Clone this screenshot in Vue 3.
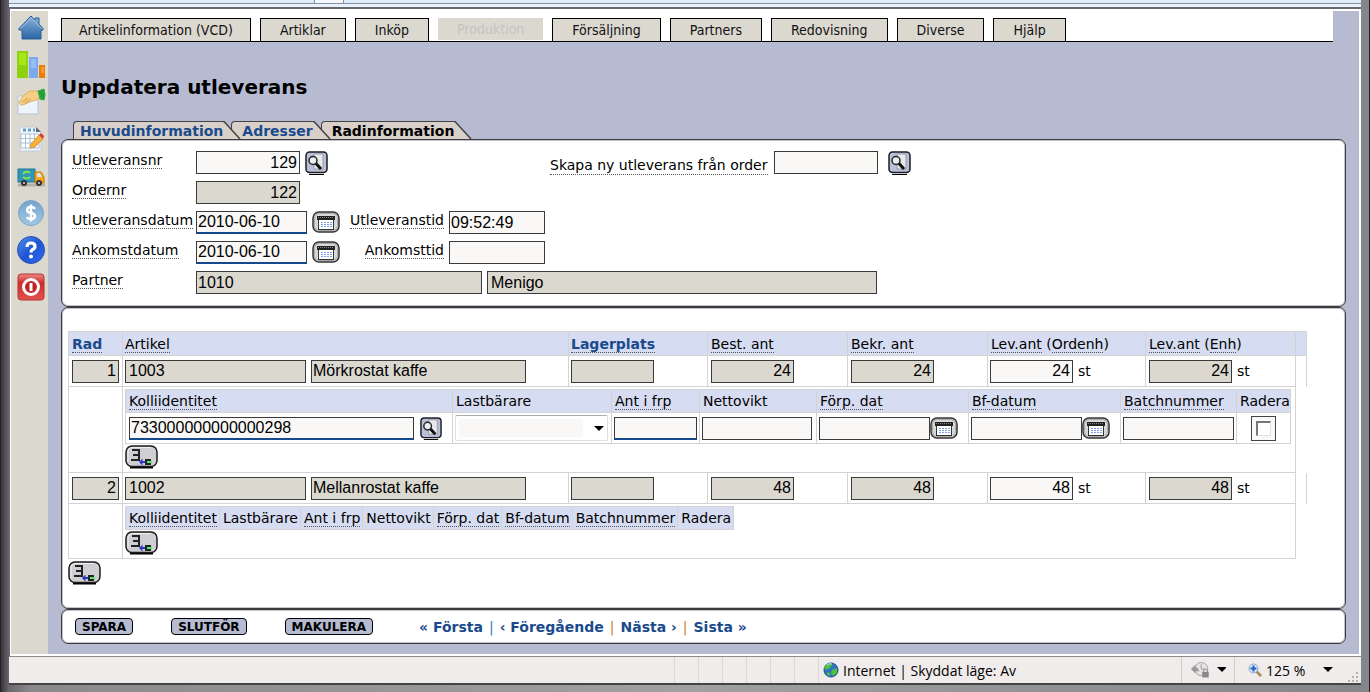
<script setup>
import { ref } from 'vue'

const menu = [
  { text: 'Artikelinformation (VCD)' },
  { text: 'Artiklar' },
  { text: 'Inköp' },
  { text: 'Produktion', off: true },
  { text: 'Försäljning' },
  { text: 'Partners' },
  { text: 'Redovisning' },
  { text: 'Diverse' },
  { text: 'Hjälp' },
]

const tabs = ['Huvudinformation', 'Adresser', 'Radinformation']

const form = ref({
  nr: '129',
  order: '122',
  fromOrder: '',
  shipDate: '2010-06-10',
  shipTime: '09:52:49',
  arriveDate: '2010-06-10',
  arriveTime: '',
  partnerNo: '1010',
  partnerName: 'Menigo',
})

const rows = ref([
  { no: '1', article: '1003', name: 'Mörkrostat kaffe', place: '', ordered: '24', confirmed: '24', qty: '24', qtyUnit: '24', packages: [{ id: '733000000000000298' }] },
  { no: '2', article: '1002', name: 'Mellanrostat kaffe', place: '', ordered: '48', confirmed: '48', qty: '48', qtyUnit: '48', packages: [] },
])

const packHead = [
  { text: 'Kolliidentitet', term: true, cls: 'p-id' },
  { text: 'Lastbärare', cls: 'p-carrier' },
  { text: 'Ant i frp', term: true, cls: 'p-count' },
  { text: 'Nettovikt', cls: 'p-weight' },
  { text: 'Förp. dat', term: true, cls: 'p-date' },
  { text: 'Bf-datum', term: true, cls: 'p-date' },
  { text: 'Batchnummer', term: true, cls: 'p-batch' },
  { text: 'Radera', cls: 'p-del' },
]
</script>

<template>
  <div class="window">
    <div class="chrome-top"><span class="chrome-tab"></span></div>
    <div class="viewport">
      <nav class="side" aria-label="Genvägar">
        <a href="#" aria-label="Hem">
          <svg width="30" height="30" viewBox="0 0 30 30">
            <defs><linearGradient id="gh" x1="0" y1="0" x2="0" y2="1"><stop offset="0" stop-color="#8db4dc" /><stop offset="1" stop-color="#2a63a4" /></linearGradient></defs>
            <path d="M15 3 L19 7 V5 H23 V11 L27 15.500 V17 H25 V26 H6 V17 H3 V15.500 Z" fill="url(#gh)" stroke="#2c5f9a" />
            <path d="M4 16 L15 5 L26 16" fill="none" stroke="#9fc0e2" />
          </svg>
        </a>
        <a href="#" aria-label="Statistik">
          <svg width="30" height="30" viewBox="0 0 30 30">
            <rect x="1" y="1" width="11" height="27" fill="#8fd010" /><rect x="3" y="3" width="7" height="12" fill="#a8e61c" />
            <rect x="13" y="7" width="9" height="21" fill="#7ba9ee" /><rect x="15" y="9" width="5" height="9" fill="#95bcf4" />
            <rect x="23" y="15" width="6" height="13" fill="#ec7c08" /><rect x="25" y="17" width="3" height="6" fill="#f79a2e" />
          </svg>
        </a>
        <a href="#" aria-label="Överlämna">
          <svg width="30" height="30" viewBox="0 0 30 30">
            <path d="M2 9 H22 V27 H2 Z" fill="#eef4fb" stroke="#b9c4d0" />
            <path d="M3 15 C6 10 9 6 14 4 L24 4 L25 11 C21 12 20 14 16 14 L9 17 C6 19 3 18 3 15 Z" fill="#f3cf86" stroke="#dcb064" />
            <path d="M6 15 L12 11 M9 16 L15 12" stroke="#cf9d4c" fill="none" />
            <path d="M22 4 L28 2 Q30 8 28 13 L24 12 Z" fill="#22a33a" stroke="#3aa34c" />
          </svg>
        </a>
        <a href="#" aria-label="Schema">
          <svg width="30" height="30" viewBox="0 0 30 30">
            <path d="M4 3 H20 L25 8 V27 H4 Z" fill="#f1f5fa" stroke="#c3ccd8" />
            <path d="M7 6 H19" stroke="#5a9bd0" stroke-width="3" stroke-dasharray="3 2" />
            <path d="M5 10 H23 V24 H5 Z M5 14.500 H23 M5 19 H23 M9.500 10 V24 M14 10 V24 M18.500 10 V24" fill="#fff" stroke="#a9bfd8" />
            <path d="M20 3 L25 8 H20 Z" fill="#5e6670" />
            <path d="M15 20 L23 11 L27 15 L19 23 L14 24 Z" fill="#f5b13a" stroke="#d99a42" />
            <path d="M23 11 L25 9 L28 12 L27 15 Z" fill="#d83a3a" />
          </svg>
        </a>
        <a href="#" aria-label="Transport">
          <svg width="30" height="30" viewBox="0 0 30 30">
            <path d="M2 24 H29" stroke="#b3b0a9" stroke-width="3" />
            <rect x="2" y="8" width="17" height="13" fill="#2f97ba" stroke="#1f7796" />
            <path d="M7 13 Q10 9 14 12 M14 16 Q11 19 7 16" fill="none" stroke="#8be04c" stroke-width="2" />
            <path d="M19 11 H25 L28 16 V22 H19 Z" fill="#f7a81b" stroke="#c97c0c" />
            <path d="M21 12 H24 L26 16 H21 Z" fill="#cfe6f5" />
            <circle cx="8" cy="22" r="3" fill="#333" /><circle cx="8" cy="22" r="1" fill="#ddd" />
            <circle cx="23" cy="22" r="3" fill="#333" /><circle cx="23" cy="22" r="1" fill="#ddd" />
          </svg>
        </a>
        <a href="#" aria-label="Ekonomi">
          <svg width="30" height="30" viewBox="0 0 30 30">
            <defs><linearGradient id="gd" x1="0" y1="0" x2="0" y2="1"><stop offset="0" stop-color="#74a3c9" /><stop offset="1" stop-color="#a0c9e6" /></linearGradient></defs>
            <circle cx="15" cy="15" r="12.500" fill="url(#gd)" stroke="#7ba6c8" />
            <path d="M19 11 Q18 9 15 9 Q11 9 11 12 Q11 14.500 15 15 Q19 15.500 19 18 Q19 21 15 21 Q12 21 11 19 M15 6.500 V23.500" fill="none" stroke="#fff" stroke-width="2.500" />
          </svg>
        </a>
        <a href="#" aria-label="Hjälp">
          <svg width="30" height="30" viewBox="0 0 30 30">
            <defs><linearGradient id="gq" x1="0" y1="0" x2="1" y2="1"><stop offset="0" stop-color="#4f93f3" /><stop offset=".5" stop-color="#1f55d2" /><stop offset="1" stop-color="#2c6df0" /></linearGradient></defs>
            <circle cx="15" cy="15" r="13.500" fill="url(#gq)" stroke="#2a4fae" />
            <path d="M11 12 Q11 8 15 8 Q19 8 19 11.500 Q19 13.500 16.500 14.500 Q15 15.500 15 17.500" fill="none" stroke="#fff" stroke-width="3.200" />
            <circle cx="15" cy="21.500" r="2" fill="#fff" />
          </svg>
        </a>
        <a href="#" aria-label="Logga ut">
          <svg width="30" height="30" viewBox="0 0 30 30">
            <defs><linearGradient id="gp" x1="0" y1="0" x2="0" y2="1"><stop offset="0" stop-color="#e98a86" /><stop offset=".35" stop-color="#d02c2a" /><stop offset="1" stop-color="#e2524c" /></linearGradient></defs>
            <rect x="2" y="2" width="26" height="26" rx="3" fill="url(#gp)" stroke="#b93431" />
            <circle cx="15" cy="15" r="7.500" fill="#c02524" stroke="#fff" stroke-width="3" />
            <path d="M15 11 V19" stroke="#fff" stroke-width="3" />
          </svg>
        </a>
      </nav>

      <main class="page">
        <nav class="menu" aria-label="Huvudmeny">
          <button v-for="m in menu" :key="m.text" type="button" :disabled="m.off">{{ m.text }}</button>
        </nav>

        <h1>Uppdatera utleverans</h1>

        <nav class="tabs" aria-label="Flikar">
          <a v-for="(t, i) in tabs" :key="t" href="#" :class="['tab', 'tab-' + i]">
            <span>{{ t }}</span>
            <svg width="18" height="18" viewBox="0 0 18 18"><path d="M0 0 H1 L17 18 H0 Z" fill="#d8d0c9" /><path d="M0 .5 H1 L17 18" fill="none" stroke="#444" stroke-width="1.500" /></svg>
          </a>
        </nav>

        <section class="panel form">
          <div class="row">
            <div class="cap"><label for="nr" class="term">Utleveransnr</label></div>
            <input id="nr" v-model="form.nr" class="w104 num">
            <button type="button" class="ico find" aria-label="Sök utleverans"><svg width="23" height="24"><use href="#s-find" /></svg></button>
            <div class="from">
              <label for="fo" class="term">Skapa ny utleverans från order</label>
              <input id="fo" v-model="form.fromOrder" class="w104">
              <button type="button" class="ico find far" aria-label="Sök order"><svg width="23" height="24"><use href="#s-find" /></svg></button>
            </div>
          </div>
          <div class="row">
            <div class="cap"><label for="onr" class="term">Ordernr</label></div>
            <input id="onr" v-model="form.order" class="w104 num ro" readonly>
          </div>
          <div class="row">
            <div class="cap"><label for="sd" class="term">Utleveransdatum</label></div>
            <input id="sd" v-model="form.shipDate" class="w111 req">
            <button type="button" class="ico cal" aria-label="Välj utleveransdatum"><svg width="28" height="22"><use href="#s-cal" /></svg></button>
            <div class="cap2"><label for="st" class="term">Utleveranstid</label></div>
            <input id="st" v-model="form.shipTime" class="w96">
          </div>
          <div class="row">
            <div class="cap"><label for="ad" class="term">Ankomstdatum</label></div>
            <input id="ad" v-model="form.arriveDate" class="w111 req">
            <button type="button" class="ico cal" aria-label="Välj ankomstdatum"><svg width="28" height="22"><use href="#s-cal" /></svg></button>
            <div class="cap2"><label for="at" class="term">Ankomsttid</label></div>
            <input id="at" v-model="form.arriveTime" class="w96">
          </div>
          <div class="row">
            <div class="cap"><label for="pn" class="term">Partner</label></div>
            <input id="pn" v-model="form.partnerNo" class="w286 ro" readonly>
            <input v-model="form.partnerName" class="w390 ro" aria-label="Partnernamn" readonly>
          </div>
        </section>

        <section class="panel lines">
          <table class="main">
            <colgroup><col class="c-no"><col><col class="c-place"><col class="c-qty"><col class="c-qty"><col class="c-lev"><col class="c-enh"><col class="c-end"></colgroup>
            <thead>
              <tr>
                <th><a href="#" class="term">Rad</a></th>
                <th><span class="term">Artikel</span></th>
                <th><a href="#" class="term">Lagerplats</a></th>
                <th><span class="term">Best. ant</span></th>
                <th><span class="term">Bekr. ant</span></th>
                <th><span class="term">Lev.ant</span> (<span class="term">Ordenh</span>)</th>
                <th><span class="term">Lev.ant</span> (<span class="term">Enh</span>)</th>
                <th></th>
              </tr>
            </thead>
            <tbody>
              <template v-for="r in rows" :key="r.no">
                <tr class="item">
                  <td><input v-model="r.no" class="w47 num ro" aria-label="Rad" readonly></td>
                  <td><div class="flex"><input v-model="r.article" class="w181 ro" aria-label="Artikel" readonly><input v-model="r.name" class="w215 ro" aria-label="Artikelnamn" readonly></div></td>
                  <td><input v-model="r.place" class="w83 ro" aria-label="Lagerplats" readonly></td>
                  <td><input v-model="r.ordered" class="w83 num ro" aria-label="Best. ant" readonly></td>
                  <td><input v-model="r.confirmed" class="w83 num ro" aria-label="Bekr. ant" readonly></td>
                  <td><div class="flex"><input v-model="r.qty" class="w83 num" aria-label="Lev.ant (Ordenh)"><span>st</span></div></td>
                  <td><div class="flex"><input v-model="r.qtyUnit" class="w83 num ro" aria-label="Lev.ant (Enh)" readonly><span>st</span></div></td>
                  <td></td>
                </tr>
                <tr class="sub">
                  <td></td>
                  <td colspan="6">
                    <table :class="['pack', { full: r.packages.length }]">
                      <thead>
                        <tr><th v-for="h in packHead" :key="h.text" :class="h.cls"><span :class="{ term: h.term }">{{ h.text }}</span></th></tr>
                      </thead>
                      <tbody v-if="r.packages.length">
                        <tr v-for="p in r.packages" :key="p.id">
                          <td><div class="flex"><input v-model="p.id" class="w285 req" aria-label="Kolliidentitet"><button type="button" class="ico find" aria-label="Sök kolli"><svg width="24" height="23"><use href="#s-find" /></svg></button></div></td>
                          <td><div class="pick"><select aria-label="Lastbärare"><option></option></select></div></td>
                          <td><input class="w83 req" aria-label="Ant i frp"></td>
                          <td><input class="w110" aria-label="Nettovikt"></td>
                          <td><div class="flex"><input class="w111" aria-label="Förp. dat"><button type="button" class="ico cal" aria-label="Välj förp. dat"><svg width="28" height="22"><use href="#s-cal" /></svg></button></div></td>
                          <td><div class="flex"><input class="w111" aria-label="Bf-datum"><button type="button" class="ico cal" aria-label="Välj bf-datum"><svg width="28" height="22"><use href="#s-cal" /></svg></button></div></td>
                          <td><input class="w111" aria-label="Batchnummer"></td>
                          <td><label class="tick"><input type="checkbox" aria-label="Radera"></label></td>
                        </tr>
                      </tbody>
                    </table>
                    <button type="button" class="ico add" aria-label="Lägg till kolli"><svg width="33" height="24"><use href="#s-add" /></svg></button>
                  </td>
                  <td class="none"></td>
                </tr>
              </template>
            </tbody>
          </table>
          <button type="button" class="ico add" aria-label="Lägg till rad"><svg width="33" height="24"><use href="#s-add" /></svg></button>
        </section>

        <section class="panel foot">
          <button type="button" class="cmd">SPARA</button>
          <button type="button" class="cmd">SLUTFÖR</button>
          <button type="button" class="cmd">MAKULERA</button>
          <nav class="pager" aria-label="Bläddra">
            <a href="#">« Första</a><i>|</i><a href="#">‹ Föregående</a><i class="or">|</i><a href="#">Nästa ›</a><i class="or">|</i><a href="#">Sista »</a>
          </nav>
        </section>
      </main>
    </div>

    <footer class="status">
      <div class="cells"><b></b><b></b><b></b><b></b><b></b><b></b></div>
      <div class="zone">
        <svg width="16" height="16" viewBox="0 0 16 16"><circle cx="8" cy="8" r="7" fill="#2f74c4" stroke="#1c4f86" /><path d="M3 3 Q7 0 9 3 L7 6 L3 8 L1 6 Z M9 8 L14 6 L14 11 L10 14 L8 11 Z M4 10 L7 11 L7 14 L4 13 Z" fill="#4cc23e" /><path d="M4 3 Q6 1 9 2" stroke="#cfe6ff" fill="none" /></svg>
        <span>Internet | Skyddat läge: Av</span>
      </div>
      <button type="button" class="drop guard" aria-label="Skyddat läge">
        <svg width="22" height="20" viewBox="0 0 22 20"><circle cx="12" cy="9" r="7" fill="#e6e4e4" stroke="#a3a1a1" /><path d="M12 4 V9 H16" fill="none" stroke="#999" /><path d="M1 9 L6 4 V7 Q9 7 10 12 Q7 10 6 12 V14 Z" fill="#9b9999" /><rect x="13" y="12" width="7" height="6" fill="#8a8888" /><path d="M14.500 12 V10 Q16.500 8 18.500 10 V12" fill="none" stroke="#8a8888" /></svg>
        <svg width="10" height="6"><path d="M0 0 H10 L5 5 Z" /></svg>
      </button>
      <button type="button" class="drop zoom">
        <svg width="14" height="14" viewBox="0 0 14 14"><path d="M8.500 8.500 L13 13" stroke="#a98560" stroke-width="2.500" /><circle cx="5.500" cy="5.500" r="4.500" fill="#dcebfa" stroke="#8aa6c4" /><path d="M5.500 2.500 V8.500 M2.500 5.500 H8.500" stroke="#1f62c0" stroke-width="2" /></svg>
        <span>125 %</span>
        <svg width="10" height="6"><path d="M0 0 H10 L5 5 Z" /></svg>
      </button>
      <svg class="grip" width="12" height="12" viewBox="0 0 12 12"><path d="M9 1 h2 v2 h-2 z M5 5 h2 v2 h-2 z M9 5 h2 v2 h-2 z M1 9 h2 v2 h-2 z M5 9 h2 v2 h-2 z M9 9 h2 v2 h-2 z" fill="#b5b2b2" /></svg>
    </footer>

    <svg class="defs" width="0" height="0" aria-hidden="true">
      <symbol id="s-find" viewBox="0 0 23 24">
        <path d="M4 23.500 H19" stroke="#000" />
        <rect x="1" y="1" width="21" height="20.500" rx="3.500" fill="#b9bfd6" stroke="#1c1c24" stroke-width="1.500" />
        <path d="M9 3 H18 V18 H9 Z" fill="#e9e9ec" stroke="#9a9aa8" />
        <circle cx="8" cy="9.500" r="4" fill="#eeeef2" stroke="#222" stroke-width="1.500" />
        <path d="M11 12.500 L16 18" stroke="#111" stroke-width="3" />
      </symbol>
      <symbol id="s-cal" viewBox="0 0 28 22">
        <rect x="1" y="1" width="26" height="20" rx="6" fill="#d8d8d8" stroke="#333" stroke-width="1.500" />
        <rect x="2.500" y="2.500" width="23" height="17" rx="5" fill="none" stroke="#a8a8a8" />
        <rect x="6.500" y="8.500" width="15" height="10" fill="#fff" stroke="#333" />
        <rect x="5" y="5" width="18" height="4" fill="#222" />
        <path d="M6 6.500 H22" stroke="#888" stroke-dasharray="1 1" />
        <path d="M9 11.500 H20 M9 13.500 H20 M9 15.500 H20" stroke="#7d9ede" stroke-dasharray="2 1" />
      </symbol>
      <symbol id="s-add" viewBox="0 0 33 24">
        <path d="M5 22.500 H28" stroke="#000" stroke-width="2" />
        <rect x="1" y="1" width="31" height="20.500" rx="6" fill="#cfcfd3" stroke="#1c1c1c" stroke-width="1.500" />
        <path d="M3 17 V7 Q3 3 7 2.500 H26" fill="none" stroke="#efeff2" />
        <path d="M7 5 H14 V15 H6 M8 10 H14" fill="none" stroke="#222" stroke-width="2" />
        <path d="M14 17 L17.500 13.500 V16 H20 V18 H17.500 V20.500 Z" fill="#3333cc" />
        <path d="M26 15 H21 V19 H26" fill="none" stroke="#1c2a1c" stroke-width="2" />
        <path d="M22 17 H27" stroke="#5fe07a" stroke-width="2" />
      </symbol>
    </svg>
  </div>
</template>

<style>
body {
  margin: 0;
  background: #84868b;
}
</style>

<style scoped>
* {
  box-sizing: border-box;
}
.window {
  display: flex;
  flex-direction: column;
  min-height: 100vh;
  padding: 0 8px 7px;
  border: solid #222;
  border-width: 0 1px 1px;
  background: linear-gradient(90deg, #3b333b 0, #6b6670 8px, #8a8a8a 30px, #a0a0a0 50%, #84868b 99%);
  font: 14px "DejaVu Sans", Verdana, sans-serif;
  color: #000;
}
.chrome-top {
  height: 9px;
  background: linear-gradient(#dfecfa 3px, #8590a5 3px 4px, #e9f2fb 4px 7px, #666a70 7px 9px);
}
.chrome-tab {
  display: block;
  width: 30px;
  height: 3px;
  margin-left: 305px;
  background: #f5f9fd;
  border: solid #8590a5;
  border-width: 0 1px;
}
.viewport {
  flex: 1;
  display: flex;
  padding: 2px 2px 2px 1px;
  background: #fff;
  border-left: 1px solid #666;
}
.side {
  width: 37px;
  flex: none;
  display: flex;
  flex-direction: column;
  align-items: center;
  gap: 7px;
  padding: 2px 0 0 2px;
  background: #dbd8d0;
}
.side a, .side svg {
  display: block;
}
.page {
  flex: 1;
  display: flex;
  flex-direction: column;
  padding: 0 13px 10px;
  background: #b6bbd2;
}
.menu {
  display: flex;
  gap: 9px;
  height: 31px;
  margin: 0 13px 0 -13px;
  padding: 7px 0 0 13px;
  background: #fff;
  border-bottom: 1px solid #000;
}
.menu button {
  height: 23px;
  padding: 0 19px;
  border: 1px solid #000;
  border-bottom: 0;
  background: #dbd8d0;
  font: 14px "DejaVu Sans Condensed", "DejaVu Sans", Tahoma, sans-serif;
  color: #111;
}
.menu button:first-child {
  padding: 0 17px;
}
.menu button:disabled {
  height: 22px;
  border: 0;
  color: #c6c4bf;
}
h1 {
  margin: 33px 0 0;
  font-size: 20px;
  line-height: 24px;
}
.tabs {
  display: flex;
  height: 18px;
  margin: 22px 0 0 12px;
}
.tab {
  display: flex;
  position: relative;
  margin-right: -10px;
  font-weight: bold;
  color: #1a4a8c;
  text-decoration: none;
}
.tab span {
  padding: 0 0 0 6px;
  line-height: 18px;
  background: #d8d0c9;
  border: solid #444;
  border-width: 1px 0 0 1px;
  border-radius: 4px 0 0;
}
.tab-0 { z-index: 3; }
.tab-1 { z-index: 2; }
.tab-2 { z-index: 1; color: #000; }
.tab-1 span, .tab-2 span {
  padding-left: 10px;
}
.panel {
  border: 1px solid #3c3c40;
  border-radius: 7px;
  background: #fff;
  box-shadow: inset 0 0 0 1px #c4c4c8;
}
.form {
  height: 168px;
  padding: 7px 10px;
}
.row {
  display: flex;
  align-items: flex-start;
  height: 30px;
  padding-top: 4px;
}
.cap {
  width: 124px;
  flex: none;
  white-space: nowrap;
}
.cap2 {
  width: 104px;
  margin-right: 5px;
  text-align: right;
}
.cap, .cap2 {
  line-height: 18px;
}
.term {
  border-bottom: 1px dotted #555;
}
input {
  height: 23px;
  flex: none;
  padding: 0 2px 0 1px;
  border: 1px solid #3a3a3a;
  border-radius: 0;
  background: #f9f8f6;
  font: 16px "Liberation Sans", Arial, sans-serif;
  color: #000;
  outline: 0;
}
.num { text-align: right; }
.ro { background: #dbd8d0; }
.req { border-bottom: 2px solid #144a8c; }
.w47 { width: 47px; }
.w83 { width: 83px; }
.w96 { width: 96px; }
.w104 { width: 104px; }
.w110 { width: 110px; }
.w111 { width: 111px; }
.w181 { width: 181px; padding-left: 3px; }
.w215 { width: 215px; }
.w285 { width: 285px; }
.w286 { width: 286px; margin-right: 5px; }
.w390 { width: 390px; padding-left: 3px; }
.ico {
  display: block;
  padding: 0;
  border: 0;
  background: none;
}
.ico svg {
  display: block;
}
.ico.find { margin-left: 5px; }
.ico.far { margin-left: 10px; }
.row .cal { margin-left: 5px; }
.from {
  display: flex;
  margin-left: 222px;
}
.from label {
  margin-right: 6px;
  line-height: 18px;
  align-self: flex-end;
  height: 19px;
}
.lines {
  height: 302px;
  padding: 23px 6px 0;
}
.main {
  width: calc(100% - 32px);
  table-layout: fixed;
  border-collapse: collapse;
}
.c-no { width: 54px; }
.c-place { width: 139px; }
.c-qty { width: 140px; }
.c-lev { width: 158px; }
.c-enh { width: 150px; }
.c-end { width: 11px; }
th, td {
  padding: 0 3px;
  border: 1px solid #d3d3d3;
  text-align: left;
  vertical-align: middle;
  font-weight: normal;
  white-space: nowrap;
}
th {
  height: 24px;
  background: #d6dcf1;
}
th a {
  font-weight: bold;
  color: #1a4a8c;
  text-decoration: none;
}
.main > tbody > tr > td:nth-child(2) {
  padding-left: 2px;
}
.main > thead > tr > th:nth-child(2),
.main > thead > tr > th:nth-child(3),
.item > td:nth-child(3),
.item > td:nth-child(6) {
  padding-left: 2px;
}
.item > td {
  height: 31px;
}
td > input {
  display: block;
}
.flex {
  display: flex;
  align-items: center;
  gap: 5px;
}
.pack .flex {
  gap: 0;
}
.sub > td {
  padding: 2px 2px 3px;
  vertical-align: top;
}
.sub > td.none {
  border-style: hidden hidden hidden solid;
}
.pack {
  border-collapse: collapse;
}
.pack th {
  height: 23px;
  padding: 0 2px 0 3px;
}
.pack.full {
  table-layout: fixed;
  width: 1166px;
}
.pack td {
  height: 31px;
  padding: 0 2px;
}
.pack th:first-child, .pack td:first-child {
  padding-left: 3px;
}
.full .p-id { width: 327px; }
.full .p-carrier { width: 159px; }
.full .p-count { width: 88px; }
.full .p-weight { width: 117px; }
.full .p-date { width: 152px; }
.full .p-batch { width: 116px; }
.pick {
  position: relative;
}
.pick select {
  display: block;
  width: 153px;
  height: 26px;
  appearance: none;
  border: 1px solid #dcdfe4;
  border-top-color: #abadb3;
  border-radius: 2px;
  background: linear-gradient(#f9f8f6, #f9f8f6) 3px 3px / 124px 18px no-repeat #fff;
}
.pick::after {
  content: "";
  position: absolute;
  right: 5px;
  top: 11px;
  border: 5px solid transparent;
  border-top-color: #000;
  border-bottom: 0;
}
.tick {
  display: block;
  width: 25px;
  height: 25px;
  margin-left: 12px;
  padding: 4px;
  border: 1px solid #444;
  background: #f9f8f6;
}
.tick input {
  display: block;
  appearance: none;
  width: 15px;
  height: 15px;
  margin: 0;
  padding: 0;
  border: 1px solid #e0e0e0;
  border-top: 2px solid #777;
  border-left: 2px solid #777;
  background: #fff;
}
.pack + .add {
  margin-top: 1px;
}
.main + .add {
  margin-top: 2px;
}
.foot {
  display: flex;
  align-items: center;
  height: 35px;
  padding: 0 13px;
}
.cmd {
  height: 17px;
  margin-right: 38px;
  padding: 0 6px;
  border: 1px solid #000;
  border-radius: 4px;
  background: #b6bbd2;
  font: bold 12px/14px "DejaVu Sans", Verdana, sans-serif;
  color: #000;
}
.pager {
  margin-left: 8px;
}
.pager a {
  font-weight: bold;
  color: #1a4a8c;
  text-decoration: none;
}
.pager i {
  margin: 0 6px;
  font-style: normal;
  color: #3a78b8;
}
.pager .or {
  color: #c48a1c;
}
.status {
  display: flex;
  align-items: center;
  height: 29px;
  padding-right: 2px;
  border-top: 1px solid #8b8b8b;
  border-bottom: 2px solid #444;
  background: #f0eceb;
  font: 14px "Open Sans", "Noto Sans", sans-serif;
}
.cells {
  display: flex;
  align-self: stretch;
  flex: 1;
  justify-content: flex-end;
}
.cells b {
  width: 24px;
  border-left: 1px solid #dcd8d7;
}
.zone {
  display: flex;
  align-self: stretch;
  align-items: center;
  gap: 4px;
  width: 363px;
  padding-left: 4px;
  border-left: 1px solid #dcd8d7;
}
.drop {
  display: flex;
  align-self: stretch;
  align-items: center;
  padding: 0 8px;
  border: 0;
  border-left: 1px solid #d0cccb;
  background: none;
  font: inherit;
  color: #000;
}
.guard { width: 53px; gap: 6px; }
.zoom { width: 113px; gap: 4px; padding: 0 14px 0 13px; }
.zoom span { flex: 1; text-align: left; }
.grip { align-self: flex-end; }
.defs { position: absolute; }
</style>
